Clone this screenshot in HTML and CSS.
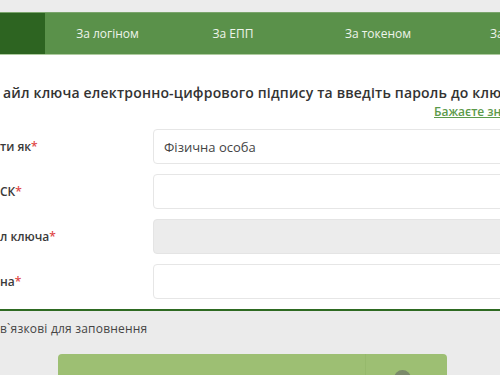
FILE: index.html
```html
<!DOCTYPE html>
<html lang="uk">
<head>
<meta charset="utf-8">
<link rel="stylesheet" href="styles.css">
</head>
<body>
<div class="page">
  <div class="topstrip"></div>
  <nav class="tabs">
    <div class="tab active"></div>
    <div class="tab t1">За логіном</div>
    <div class="tab t2">За ЕПП</div>
    <div class="tab t3">За токеном</div>
    <div class="tab t4">За</div>
  </nav>
  <section class="content">
    <h2 class="title">айл ключа електронно-цифрового підпису та введіть пароль до ключа</h2>
    <div class="hint"><a href="#">Бажаєте знайти ключ?</a></div>
    <form class="form">
      <label class="lbl">ти як<span class="req">*</span></label>
      <div class="field">Фізична особа</div>
      <label class="lbl">СК<span class="req">*</span></label>
      <div class="field"></div>
      <label class="lbl">л ключа<span class="req">*</span></label>
      <div class="field disabled"></div>
      <label class="lbl">на<span class="req">*</span></label>
      <div class="field"></div>
    </form>
  </section>
  <section class="footer">
    <p class="note">в`язкові для заповнення</p>
    <div class="btnrow">
      <div class="btn"><span class="btn-main"></span><span class="btn-side"><span class="dot"></span></span></div>
    </div>
  </section>
</div>
</body>
</html>
```
FILE: styles.css
```css
html, body {
  margin: 0;
  padding: 0;
  width: 500px;
  height: 375px;
  overflow: hidden;
  background: #ffffff;
  font-family: "Open Sans", "Noto Sans", sans-serif;
}
.page {
  width: 500px;
  height: 375px;
  overflow: hidden;
  display: flex;
  flex-direction: column;
}
.topstrip {
  height: 12px;
  background: #ececec;
  flex: none;
}
.tabs {
  flex: none;
  display: flex;
  height: 41px;
  background: #5a914a;
  border-top: 1px solid #7aa56c;
  border-bottom: 1px solid #aecb9f;
}
.tab {
  flex: none;
  display: flex;
  align-items: center;
  justify-content: center;
  color: #eef4ea;
  font-size: 12px;
  white-space: nowrap;
}
.tab.active { width: 45px; background: #2d6421; }
.tab.t1 { width: 125px; }
.tab.t2 { width: 126px; }
.tab.t3 { width: 164px; }
.tab.t4 { width: 60px; justify-content: flex-start; padding-left: 30px; }
.content {
  flex: none;
  padding: 0;
  border-bottom: 2px solid #2e6a22;
  padding-bottom: 10px;
}
.title {
  margin: 28px 0 0 3px;
  font-size: 14px;
  line-height: 20px;
  font-weight: 600;
  color: #333333;
  white-space: nowrap;
  letter-spacing: 0.18px;
}
.hint {
  margin: 1px 0 0 434px;
  font-size: 12px;
  line-height: 16px;
  white-space: nowrap;
}
.hint a {
  color: #5c9a4a;
  font-weight: 600;
  text-decoration: underline;
}
.form {
  margin-top: 9px;
  display: grid;
  grid-template-columns: 153px 380px;
  row-gap: 10px;
}
.lbl {
  display: flex;
  align-items: center;
  font-size: 12px;
  font-weight: 600;
  color: #3a3a3a;
  white-space: nowrap;
}
.req { color: #e04848; }
.field {
  height: 33px;
  border: 1px solid #e6e6e6;
  border-radius: 4px;
  background: #ffffff;
  display: flex;
  align-items: center;
  padding-left: 10px;
  font-size: 13px;
  color: #444444;
}
.field.disabled {
  background: #ececec;
  border-color: #e4e4e4;
}
.footer {
  flex: 1;
  background: #ebebeb;
}
.note {
  margin: 10px 0 0 0;
  font-size: 12px;
  line-height: 16px;
  color: #444444;
  white-space: nowrap;
  letter-spacing: 0.2px;
}
.btnrow {
  margin-top: 17px;
  padding-left: 58px;
}
.btn {
  width: 389px;
  height: 40px;
  display: flex;
  background: #9dbf73;
  border-radius: 4px;
  overflow: hidden;
}
.btn-main { width: 307px; }
.btn-side {
  flex: 1;
  border-left: 1px solid #96b96c;
  display: flex;
  justify-content: center;
  padding-top: 16px;
}
.dot {
  width: 17px;
  height: 17px;
  border-radius: 50%;
  background: #7a8a6a;
  margin-left: -8px;
}
```
